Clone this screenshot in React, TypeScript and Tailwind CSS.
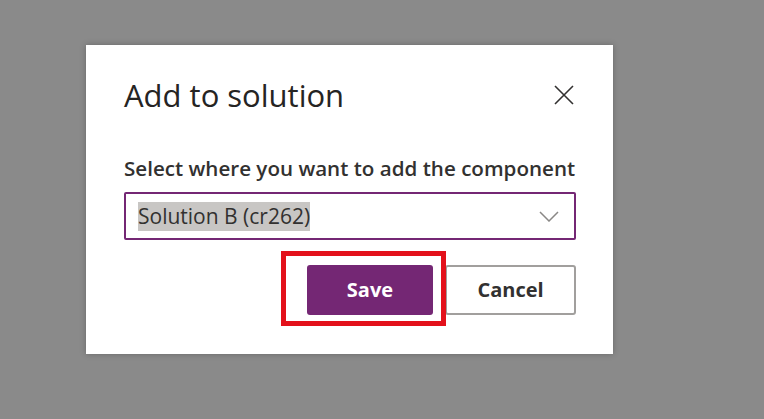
import React from "react";

export default function App() {
  return (
    <div className="h-[419px] w-[764px] overflow-hidden bg-[#8a8a8a] pl-[86px] pt-[45px] font-['Open_Sans',sans-serif]">
      {/* Dialog */}
      <div className="flex h-[309px] w-[527px] flex-col bg-white pl-[38px] pr-[37px] shadow-[0_0_6px_rgba(0,0,0,0.25)]">
        <div className="flex items-center justify-between pt-[30px]">
          <h2 className="text-[31px] leading-[40px] text-[#252423]">Add to solution</h2>
          <button className="flex h-[24px] w-[24px] items-center justify-center text-[#323130]">
            <svg width="22" height="22" viewBox="0 0 22 22" fill="none" stroke="currentColor" strokeWidth="1.6">
              <path d="M2 2 L20 20 M20 2 L2 20" />
            </svg>
          </button>
        </div>

        <label className="mt-[39px] whitespace-nowrap text-[20.6px] font-semibold leading-[28px] text-[#323130]">
          Select where you want to add the component
        </label>

        {/* Select */}
        <div className="mt-[10px] flex h-[48px] items-center justify-between rounded-[2px] border-2 border-[#742774] pl-[12px] pr-[15px]">
          <span className="bg-[#c8c6c4] text-[21px] leading-[29px] text-[#323130]">Solution B (cr262)</span>
          <svg width="20" height="11" viewBox="0 0 20 11" fill="none" stroke="#8a8886" strokeWidth="1.5">
            <path d="M1 1 L10 10 L19 1" />
          </svg>
        </div>

        {/* Buttons */}
        <div className="mt-[25px] flex justify-end gap-[12px]">
          <div className="relative">
            <button className="h-[50px] w-[126px] rounded-[3px] bg-[#742774] text-[20px] font-bold text-white">
              Save
            </button>
            <div className="pointer-events-none absolute left-[-26px] top-[-14px] h-[75px] w-[165px] border-[5px] border-[#e3111b]" />
          </div>
          <button className="h-[50px] w-[131px] rounded-[3px] border-2 border-[#a19f9d] bg-white text-[20px] font-bold text-[#323130]">
            Cancel
          </button>
        </div>
      </div>
    </div>
  );
}
